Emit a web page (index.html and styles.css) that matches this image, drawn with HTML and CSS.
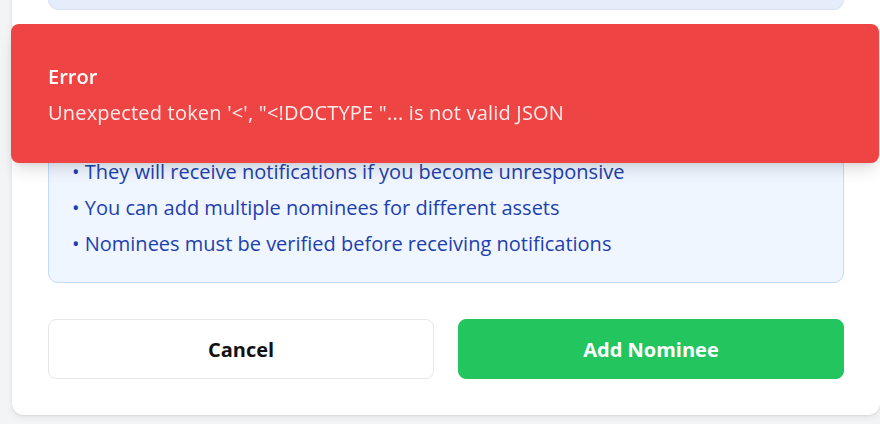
FILE: index.html
```html
<!DOCTYPE html>
<html lang="en">
<head>
<meta charset="utf-8">
<title>Add Nominee</title>
<link rel="stylesheet" href="styles.css">
</head>
<body>
<div class="card">
  <div class="top-box"></div>
  <div class="info-box">
    <ul class="info-list">
      <li>They will receive notifications if you become unresponsive</li>
      <li>You can add multiple nominees for different assets</li>
      <li>Nominees must be verified before receiving notifications</li>
    </ul>
  </div>
  <div class="actions">
    <button class="btn btn-cancel">Cancel</button>
    <button class="btn btn-primary">Add Nominee</button>
  </div>
</div>
<div class="toast" role="alert">
  <div class="toast-title">Error</div>
  <div class="toast-desc">Unexpected token '&lt;', "&lt;!DOCTYPE "... is not valid JSON</div>
</div>
</body>
</html>
```
FILE: styles.css
```css
* { box-sizing: border-box; }
html, body { margin: 0; padding: 0; }
body {
  background: #f3f4f6;
  font-family: "Open Sans", "Noto Sans", sans-serif;
  font-size: 20px;
  overflow: hidden;
  height: 424px;
}
.card {
  margin: -86px 0 0 12px;
  background: #fff;
  border-radius: 12px;
  padding: 36px 36px 36px;
  box-shadow: 0 2px 6px rgba(0,0,0,0.08), 0 1px 2px rgba(0,0,0,0.06);
}
.top-box {
  height: 60px;
  background: #e5edfa;
  border: 1px solid #d9e2f0;
  border-radius: 10px;
}
.info-box {
  margin-top: 16px;
  background: #eff6ff;
  border: 1px solid #bfdbfe;
  border-radius: 10px;
  padding: 131px 23px 24px;
  color: #1e40af;
}
.info-list {
  list-style: none;
  margin: 0;
  padding: 0;
}
.info-list li {
  line-height: 28px;
}
.info-list li + li { margin-top: 8px; }
.info-list li::before { content: "\2022\00a0"; }
.actions {
  display: flex;
  gap: 24px;
  margin-top: 36px;
}
.btn {
  flex: 1;
  height: 60px;
  border-radius: 8px;
  font-family: inherit;
  font-size: 20px;
  font-weight: 700;
  cursor: pointer;
}
.btn-cancel {
  background: #fff;
  border: 1px solid #e5e7eb;
  color: #111;
}
.btn-primary {
  background: #22c55e;
  border: 1px solid #22c55e;
  color: #fff;
}
.toast {
  position: fixed;
  top: 24px;
  left: 11px;
  right: 1px;
  height: 139px;
  background: #ef4444;
  border-radius: 8px;
  padding: 39px 36px 0 37px;
  color: #fff;
  box-shadow: 0 10px 15px -3px rgba(0,0,0,0.12), 0 4px 6px -4px rgba(0,0,0,0.1);
}
.toast-title {
  font-weight: 600;
  line-height: 28px;
}
.toast-desc {
  margin-top: 8px;
  line-height: 28px;
  letter-spacing: 0.2px;
  opacity: 0.9;
}
```
